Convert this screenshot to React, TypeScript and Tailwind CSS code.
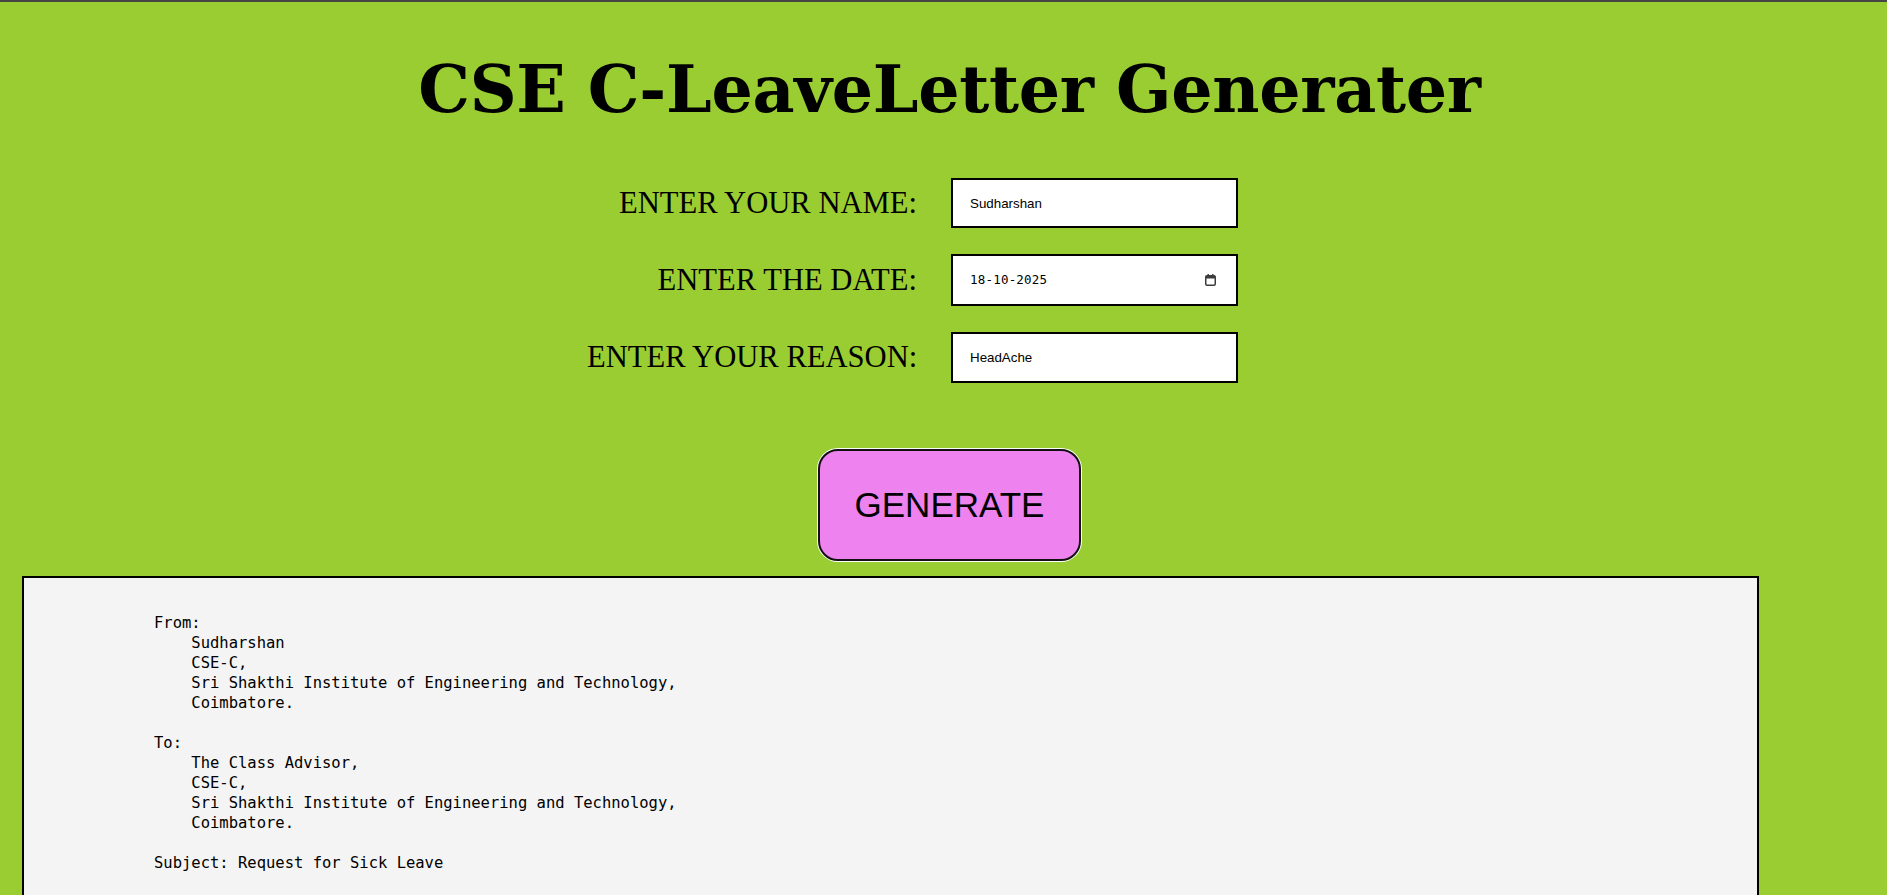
import React from "react";

const letter = `From:
    Sudharshan
    CSE-C,
    Sri Shakthi Institute of Engineering and Technology,
    Coimbatore.

To:
    The Class Advisor,
    CSE-C,
    Sri Shakthi Institute of Engineering and Technology,
    Coimbatore.

Subject: Request for Sick Leave

Respected Sir/Madam,

    I am Sudharshan, a student of CSE-C. I am suffering from HeadAche,
so I am unable to attend the classes on 18-10-2025. Kindly grant me
leave for the day.

Thanking you,

Yours obediently,
    Sudharshan`;

function CalendarIcon() {
  return (
    <svg width="11" height="12" viewBox="0 0 11 12" className="text-[#3c3c3c]">
      <rect x="0.75" y="1.75" width="9.5" height="9.5" rx="1.2" fill="none" stroke="currentColor" strokeWidth="1.5" />
      <rect x="1" y="2" width="9" height="2.5" fill="currentColor" />
      <rect x="2.5" y="0" width="1.4" height="2.5" fill="currentColor" />
      <rect x="7.1" y="0" width="1.4" height="2.5" fill="currentColor" />
    </svg>
  );
}

export default function App() {
  const labelCls =
    "text-right text-[30.6px] leading-none text-black font-['Liberation_Serif',serif] whitespace-nowrap";
  const inputCls =
    "w-[287px] h-[50px] border-2 border-black bg-white pl-[17px] text-[13.33px] text-black font-['Liberation_Sans',Arial,sans-serif] outline-none";
  return (
    <div className="min-h-screen bg-[#9acd32] border-t-2 border-[#454545]">
      <div className="pt-[47px] pl-[12px] text-center">
        <h1 className="text-[65px] leading-[80px] font-bold text-black font-['DejaVu_Serif',serif] tracking-[-0.3px]">
          CSE C-LeaveLetter Generater
        </h1>
      </div>

      <div className="mt-[49px] flex justify-center pr-[62px]">
        <div className="grid grid-cols-[330px_287px] gap-x-[34px] gap-y-[26px] items-center">
          <label className={labelCls}>ENTER YOUR NAME:</label>
          <input className={inputCls} defaultValue="Sudharshan" readOnly />

          <label className={labelCls}>ENTER THE DATE:</label>
          <div className="w-[287px] h-[52px] border-2 border-black bg-white pl-[17px] pr-[20px] flex items-center justify-between">
            <span className="text-[12.5px] text-black font-['DejaVu_Sans_Mono',monospace] tracking-[0.2px]">
              18-10-2025
            </span>
            <CalendarIcon />
          </div>

          <label className={labelCls}>ENTER YOUR REASON:</label>
          <input className={inputCls + " h-[51px]"} defaultValue="HeadAche" readOnly />
        </div>
      </div>

      <div className="mt-[66px] flex justify-center pl-[12px]">
        <button className="w-[263px] h-[112px] rounded-[20px] border-2 border-[#111] ring-1 ring-white bg-[#ee82ee] text-[35px] text-black font-['Liberation_Sans',Arial,sans-serif]">
          GENERATE
        </button>
      </div>

      <div className="mt-[15px] ml-[22px] w-[1737px] border-2 border-black bg-[#f4f4f4] pt-[35px] pl-[130px] pb-[40px]">
        <pre className="text-[15.5px] leading-[20px] text-black font-['DejaVu_Sans_Mono',monospace]">
          {letter}
        </pre>
      </div>
    </div>
  );
}
